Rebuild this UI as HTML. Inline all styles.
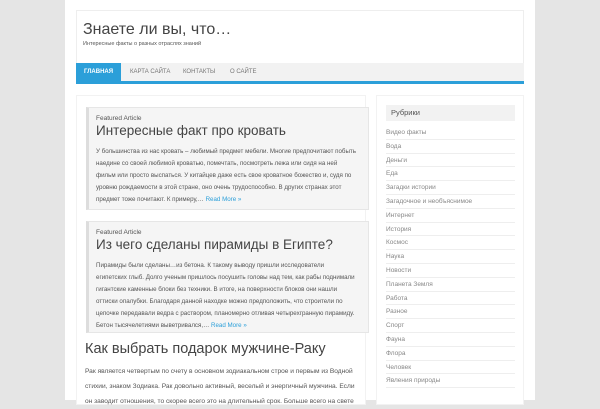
<!DOCTYPE html>
<html><head><meta charset="utf-8"><style>
*{margin:0;padding:0;box-sizing:border-box}
body{width:600px;height:400px;overflow:hidden;background:#e5e5e5;font-family:"Liberation Sans",sans-serif;color:#555;position:relative}
.page{position:absolute;left:65px;top:0;width:470px;height:400px;background:#fff}
.box{position:absolute;border:1px solid #eee;background:#fff}
.abs{position:absolute;white-space:nowrap}
.nav{position:absolute;left:76px;top:63px;width:448px;height:21px;background:#f2f2f2;border-bottom:3px solid #2b9fd9}
.nav span{position:absolute;top:0;height:18px;line-height:18px;font-size:6px;color:#777}
.feat{position:absolute;left:86px;width:283px;background:#f5f5f5;border:1px solid #e6e6e6;border-left:3px solid #ddd;padding:7px 8px 0 7px;overflow:hidden}
.feat .lbl{font-size:6.5px;color:#555;line-height:8px}
.feat h2{font-weight:normal;font-size:13.5px;color:#444;line-height:16px;margin-bottom:7px;white-space:nowrap}
.feat p{font-size:6.2px;line-height:12px;color:#555;white-space:nowrap}
a{color:#2b9fd9;text-decoration:none}
.side li{list-style:none;height:13.8px;line-height:13px;font-size:6.5px;color:#888;border-bottom:1px solid #eee}
</style></head><body>
<div class="page"></div>
<div class="box" style="left:76px;top:10px;width:448px;height:54px"></div>
<div class="abs" style="left:83px;top:21px;font-size:16px;color:#444">Знаете ли вы, что…</div>
<div class="abs" style="left:83px;top:41px;font-size:5.5px;color:#555">Интересные факты о разных отраслях знаний</div>
<div class="nav">
<span style="left:0;width:45px;background:#2b9fd9;color:#fff;font-weight:bold;text-align:center">ГЛАВНАЯ</span>
<span style="left:54px">КАРТА САЙТА</span>
<span style="left:107px">КОНТАКТЫ</span>
<span style="left:154px">О САЙТЕ</span>
</div>
<div class="box" style="left:76px;top:95px;width:290px;height:310px;border-color:#f2f2f2"></div>
<div class="box" style="left:376px;top:95px;width:148px;height:310px;border-color:#f2f2f2"></div>
<div class="feat" style="top:107px;height:103px">
<div class="lbl">Featured Article</div>
<h2>Интересные факт про кровать</h2>
<p>У большинства из нас кровать – любимый предмет мебели. Многие предпочитают побыть<br>наедине со своей любимой кроватью, помечтать, посмотреть лежа или сидя на ней<br>фильм или просто выспаться. У китайцев даже есть свое кроватное божество и, судя по<br>уровню рождаемости в этой стране, оно очень трудоспособно. В других странах этот<br>предмет тоже почитают. К примеру,… <a>Read More »</a></p>
</div>
<div class="feat" style="top:221px;height:112px">
<div class="lbl">Featured Article</div>
<h2>Из чего сделаны пирамиды в Египте?</h2>
<p>Пирамиды были сделаны…из бетона. К такому выводу пришли исследователи<br>египетских глыб. Долго ученым пришлось посушить головы над тем, как рабы поднимали<br>гигантские каменные блоки без техники. В итоге, на поверхности блоков они нашли<br>оттиски опалубки. Благодаря данной находке можно предположить, что строители по<br>цепочке передавали ведра с раствором, планомерно отливая четырехгранную пирамиду.<br>Бетон тысячелетиями выветривался,… <a>Read More »</a></p>
</div>
<div class="abs" style="left:85px;top:341px;font-size:14.5px;color:#444">Как выбрать подарок мужчине-Раку</div>
<div class="abs" style="left:85px;top:364px;font-size:6.6px;line-height:15px;color:#555">Рак является четвертым по счету в основном зодиакальном строе и первым из Водной<br>стихии, знаком Зодиака. Рак довольно активный, веселый и энергичный мужчина. Если<br>он заводит отношения, то скорее всего это на длительный срок. Больше всего на свете</div>
<div class="abs" style="left:386px;top:105px;width:129px;height:16px;background:#f2f2f2;font-size:7.5px;line-height:16px;padding-left:5px;color:#555">Рубрики</div>
<ul class="side abs" style="left:386px;top:126px;width:129px">
<li>Видео факты</li><li>Вода</li><li>Деньги</li><li>Еда</li><li>Загадки истории</li><li>Загадочное и необъяснимое</li><li>Интернет</li><li>История</li><li>Космос</li><li>Наука</li><li>Новости</li><li>Планета Земля</li><li>Работа</li><li>Разное</li><li>Спорт</li><li>Фауна</li><li>Флора</li><li>Человек</li><li>Явления природы</li>
</ul>
</body></html>
